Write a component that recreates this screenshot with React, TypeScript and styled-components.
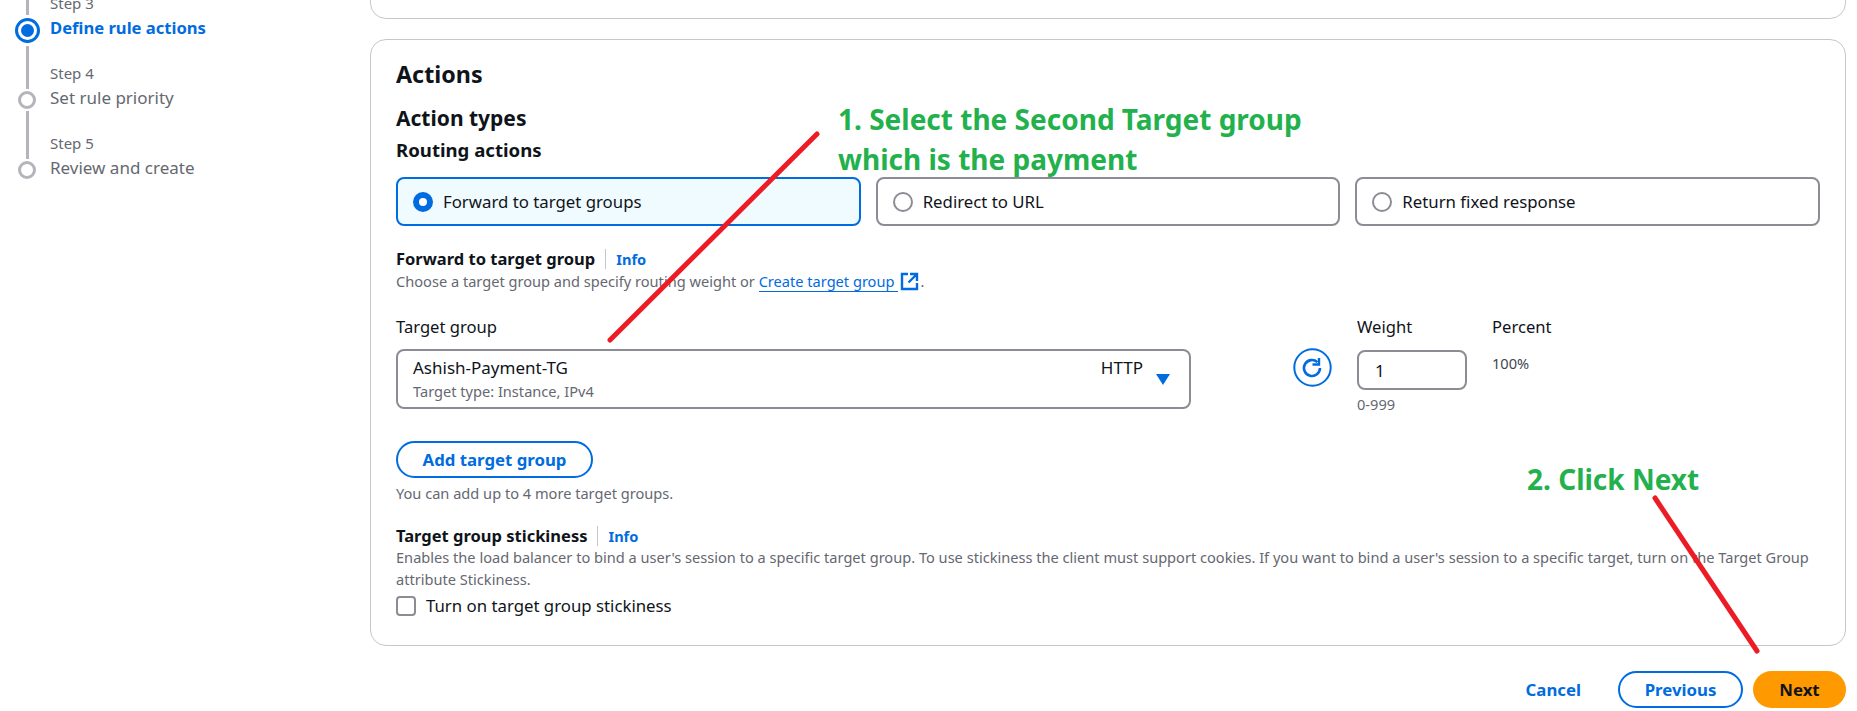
import React from "react";
import styled, { createGlobalStyle } from "styled-components";

const Global = createGlobalStyle`
  html, body { margin: 0; padding: 0; background: #fff; }
  body { font-family: "Noto Sans", "Open Sans", sans-serif; color: #0f141a; }
  * { box-sizing: border-box; }
`;

const Page = styled.div`
  position: relative;
  width: 1857px;
  height: 711px;
  overflow: hidden;
  display: flex;
`;

const Sidebar = styled.nav`
  width: 370px;
  flex: none;
  margin-top: -29px;
  display: flex;
  flex-direction: column;
`;

const Step = styled.div`
  height: 70px;
  display: flex;
`;

const Marker = styled.div`
  width: 50px;
  margin-left: 2px;
  flex: none;
  display: flex;
  flex-direction: column;
  align-items: flex-start;
`;

const Rail = styled.div<{ $afterActive?: boolean; $active?: boolean }>`
  width: 3.5px;
  flex: 1;
  margin-left: 23.5px;
  background: #b4b4bb;
  margin-top: ${(p) => (p.$afterActive ? "5px" : "0")};
  margin-bottom: ${(p) => (p.$active ? "4px" : "0")};
`;

const DotSlot = styled.div`
  height: 22px;
  width: 50px;
  display: flex;
  align-items: center;
  justify-content: center;
`;

const ActiveDot = styled.span`
  flex: none;
  width: 25px;
  height: 25px;
  border-radius: 50%;
  border: 3px solid #006ce0;
  background: #fff;
  display: flex;
  align-items: center;
  justify-content: center;
  &::after {
    content: "";
    width: 13px;
    height: 13px;
    border-radius: 50%;
    background: #006ce0;
  }
`;

const IdleDot = styled.span`
  flex: none;
  width: 18px;
  height: 18px;
  border-radius: 50%;
  border: 3px solid #b4b4bb;
  background: #fff;
`;

const StepText = styled.div`
  display: flex;
  flex-direction: column;
  justify-content: flex-end;
  padding-bottom: 2px;
  margin-left: -2px;
`;

const StepLabel = styled.div`
  font-size: 15px;
  line-height: 20px;
  color: #656871;
  margin-bottom: 4px;
`;

const StepTitle = styled.div<{ $active?: boolean }>`
  font-size: ${(p) => (p.$active ? "16.6px" : "17px")};
  line-height: 22px;
  white-space: nowrap;
  font-weight: ${(p) => (p.$active ? 700 : 400)};
  color: ${(p) => (p.$active ? "#006ce0" : "#656871")};
`;

const Main = styled.main`
  flex: 1;
  min-width: 0;
  padding-right: 11px;
  display: flex;
  flex-direction: column;
`;

const Card = styled.section`
  border: 1px solid #c6c6cd;
  border-radius: 16px;
  background: #fff;
  padding: 0 25px;
`;

const ClippedCard = styled(Card)`
  height: 60px;
  margin-top: -41px;
  flex: none;
`;

const ActionsCard = styled(Card)`
  margin-top: 20px;
  height: 607px;
  flex: none;
  padding-top: 19px;
`;

const CardTitle = styled.h2`
  margin: 0;
  font-size: 23.3px;
  line-height: 30px;
  font-weight: 700;
`;

const TypesTitle = styled.h3`
  margin: 15px 0 0;
  font-size: 21px;
  line-height: 28px;
  font-weight: 700;
`;

const RoutingTitle = styled.h4`
  margin: 5px 0 0;
  font-size: 18.6px;
  line-height: 26px;
  font-weight: 700;
`;

const Tiles = styled.div`
  margin-top: 14px;
  display: grid;
  grid-template-columns: repeat(3, 1fr);
  gap: 15px;
  width: 1424px;
`;

const Tile = styled.div<{ $selected?: boolean }>`
  height: 49px;
  border-radius: 8px;
  border: 2px solid ${(p) => (p.$selected ? "#006ce0" : "#8c8c94")};
  background: ${(p) => (p.$selected ? "#f0fbff" : "#fff")};
  display: flex;
  align-items: center;
  gap: 10px;
  padding: 0 15px;
  font-size: 16.8px;
`;

const RadioMark = styled.span<{ $selected?: boolean }>`
  flex: none;
  width: 20px;
  height: 20px;
  border-radius: 50%;
  background: #fff;
  border: ${(p) => (p.$selected ? "6px solid #006ce0" : "2px solid #8c8c94")};
`;

const FieldHead = styled.div<{ $top: number }>`
  margin-top: ${(p) => p.$top}px;
  display: flex;
  align-items: center;
  height: 22px;
`;

const FieldTitle = styled.span`
  font-size: 16.5px;
  font-weight: 700;
  line-height: 22px;
`;

const InfoLink = styled.span`
  margin-left: 10px;
  padding-left: 10px;
  border-left: 1px solid #c6c6cd;
  font-size: 14.6px;
  font-weight: 700;
  color: #006ce0;
  line-height: 20px;
`;

const Hint = styled.div<{ $top?: number }>`
  margin-top: ${(p) => p.$top ?? 0}px;
  font-size: 14.6px;
  line-height: 22px;
  color: #656871;
`;

const DocLink = styled.span`
  color: #006ce0;
  border-bottom: 1px solid #006ce0;
  padding-right: 4px;
`;

const ExternalIcon = styled.svg`
  width: 19px;
  height: 19px;
  margin: 0 1px 0 2px;
  vertical-align: -4px;
`;

const TargetRow = styled.div`
  margin-top: 24px;
  display: flex;
  align-items: flex-start;
`;

const TargetColumn = styled.div`
  width: 795px;
  flex: none;
`;

const FieldLabel = styled.div`
  font-size: 16.6px;
  line-height: 22px;
  white-space: nowrap;
`;

const SelectBox = styled.div`
  margin-top: 11px;
  height: 60px;
  border: 2px solid #8c8c94;
  border-radius: 8px;
  padding: 5px 19px 0 15px;
  display: flex;
  justify-content: space-between;
`;

const SelectMain = styled.div`
  font-size: 17px;
  line-height: 24px;
`;

const SelectSub = styled.div`
  font-size: 14.6px;
  line-height: 22px;
  color: #656871;
`;

const SelectSide = styled.div`
  display: flex;
  gap: 13px;
  font-size: 17px;
  line-height: 24px;
`;

const CaretIcon = styled.svg`
  width: 14px;
  height: 12px;
  margin-top: 17px;
`;

const RefreshButton = styled.div`
  margin: 32px 0 0 102px;
  width: 39px;
  height: 39px;
  flex: none;
  display: flex;
`;

const RefreshIcon = styled.svg`
  width: 100%;
  height: 100%;
`;

const WeightColumn = styled.div`
  margin-left: 25px;
  width: 110px;
  flex: none;
`;

const WeightBox = styled.div`
  margin-top: 12px;
  height: 40px;
  border: 2px solid #8c8c94;
  border-radius: 8px;
  padding: 0 16px;
  font-size: 17px;
  display: flex;
  align-items: center;
`;

const PercentColumn = styled.div`
  margin-left: 25px;
`;

const PercentValue = styled.div`
  margin-top: 14px;
  font-size: 14.6px;
  line-height: 22px;
  color: #424650;
`;

const OutlineButton = styled.div<{ $width: number }>`
  width: ${(p) => p.$width}px;
  height: 37px;
  border: 2px solid #006ce0;
  border-radius: 19px;
  display: flex;
  align-items: center;
  justify-content: center;
  font-size: 16.8px;
  font-weight: 700;
  color: #006ce0;
`;

const AddWrap = styled.div`
  margin-top: 26px;
`;

const CheckRow = styled.div`
  margin-top: 4px;
  display: flex;
  align-items: center;
  gap: 10px;
  font-size: 16.8px;
  line-height: 24px;
`;

const CheckBox = styled.span`
  width: 20px;
  height: 20px;
  flex: none;
  border: 2px solid #8c8c94;
  border-radius: 4px;
  background: #fff;
`;

const Footer = styled.footer`
  margin-top: 25px;
  display: flex;
  justify-content: flex-end;
  align-items: center;
`;

const CancelLink = styled.span`
  font-size: 16.8px;
  font-weight: 700;
  color: #006ce0;
  margin-right: 37px;
`;

const PrimaryButton = styled.div`
  margin-left: 10px;
  width: 93px;
  height: 37px;
  border-radius: 19px;
  background: #ff9900;
  display: flex;
  align-items: center;
  justify-content: center;
  font-size: 16.8px;
  font-weight: 700;
  color: #0f141a;
`;

const Note = styled.div<{ $x: number; $y: number }>`
  position: absolute;
  left: ${(p) => p.$x}px;
  top: ${(p) => p.$y}px;
  font-family: "Noto Sans", sans-serif;
  font-size: 28px;
  line-height: 40px;
  font-weight: 700;
  color: #22b14c;
  white-space: nowrap;
`;

const Ink = styled.svg`
  position: absolute;
  inset: 0;
  width: 1857px;
  height: 711px;
  pointer-events: none;
`;

export default function App() {
  return (
    <Page>
      <Global />
      <Sidebar>
        <Step>
          <Marker>
            <Rail $active />
            <DotSlot><ActiveDot /></DotSlot>
          </Marker>
          <StepText>
            <StepLabel>Step 3</StepLabel>
            <StepTitle $active>Define rule actions</StepTitle>
          </StepText>
        </Step>
        <Step>
          <Marker>
            <Rail $afterActive />
            <DotSlot><IdleDot /></DotSlot>
          </Marker>
          <StepText>
            <StepLabel>Step 4</StepLabel>
            <StepTitle>Set rule priority</StepTitle>
          </StepText>
        </Step>
        <Step>
          <Marker>
            <Rail />
            <DotSlot><IdleDot /></DotSlot>
          </Marker>
          <StepText>
            <StepLabel>Step 5</StepLabel>
            <StepTitle>Review and create</StepTitle>
          </StepText>
        </Step>
      </Sidebar>
      <Main>
        <ClippedCard />
        <ActionsCard>
          <CardTitle>Actions</CardTitle>
          <TypesTitle>Action types</TypesTitle>
          <RoutingTitle>Routing actions</RoutingTitle>
          <Tiles>
            <Tile $selected><RadioMark $selected />Forward to target groups</Tile>
            <Tile><RadioMark />Redirect to URL</Tile>
            <Tile><RadioMark />Return fixed response</Tile>
          </Tiles>
          <FieldHead $top={22}>
            <FieldTitle>Forward to target group</FieldTitle>
            <InfoLink>Info</InfoLink>
          </FieldHead>
          <Hint>
            Choose a target group and specify routing weight or <DocLink>Create target group</DocLink>
            <ExternalIcon viewBox="0 0 19 19" fill="none" stroke="#006ce0" strokeWidth="2.4">
              <path d="M8 2H2v15h15v-6" />
              <path d="M10 2h7v7M17 2L8.5 10.5" />
            </ExternalIcon>.
          </Hint>
          <TargetRow>
            <TargetColumn>
              <FieldLabel>Target group</FieldLabel>
              <SelectBox>
                <div>
                  <SelectMain>Ashish-Payment-TG</SelectMain>
                  <SelectSub>Target type: Instance, IPv4</SelectSub>
                </div>
                <SelectSide>
                  <span>HTTP</span>
                  <CaretIcon viewBox="0 0 14 12"><path d="M0 1h14L7 12z" fill="#006ce0" /></CaretIcon>
                </SelectSide>
              </SelectBox>
            </TargetColumn>
            <RefreshButton>
              <RefreshIcon viewBox="0 0 39 39" fill="none" stroke="#006ce0" strokeWidth="2">
                <circle cx="19.5" cy="19.5" r="18.2" />
                <path d="M27 20a8 8 0 1 1-2.6-5.9" strokeWidth="2.6" />
                <path d="M26 10v6.5h-6.5" strokeWidth="2.4" />
              </RefreshIcon>
            </RefreshButton>
            <WeightColumn>
              <FieldLabel>Weight</FieldLabel>
              <WeightBox>1</WeightBox>
              <Hint $top={3}>0-999</Hint>
            </WeightColumn>
            <PercentColumn>
              <FieldLabel>Percent</FieldLabel>
              <PercentValue>100%</PercentValue>
            </PercentColumn>
          </TargetRow>
          <AddWrap>
            <OutlineButton $width={197}>Add target group</OutlineButton>
          </AddWrap>
          <Hint $top={4}>You can add up to 4 more target groups.</Hint>
          <FieldHead $top={21}>
            <FieldTitle>Target group stickiness</FieldTitle>
            <InfoLink>Info</InfoLink>
          </FieldHead>
          <Hint $top={-1}>
            Enables the load balancer to bind a user's session to a specific target group. To use stickiness the client must support cookies. If you want to bind a user's session to a specific target, turn on the Target Group attribute Stickiness.
          </Hint>
          <CheckRow><CheckBox />Turn on target group stickiness</CheckRow>
        </ActionsCard>
        <Footer>
          <CancelLink>Cancel</CancelLink>
          <OutlineButton $width={125}>Previous</OutlineButton>
          <PrimaryButton>Next</PrimaryButton>
        </Footer>
      </Main>
      <Note $x={838} $y={99}>1. Select the Second Target group<br />which is the payment</Note>
      <Note $x={1527} $y={459}>2. Click Next</Note>
      <Ink viewBox="0 0 1857 711" fill="none" stroke="#ed1c24" strokeWidth="5" strokeLinecap="round">
        <path d="M817 134L610 340" />
        <path d="M1655 498L1757 651" />
      </Ink>
    </Page>
  );
}
